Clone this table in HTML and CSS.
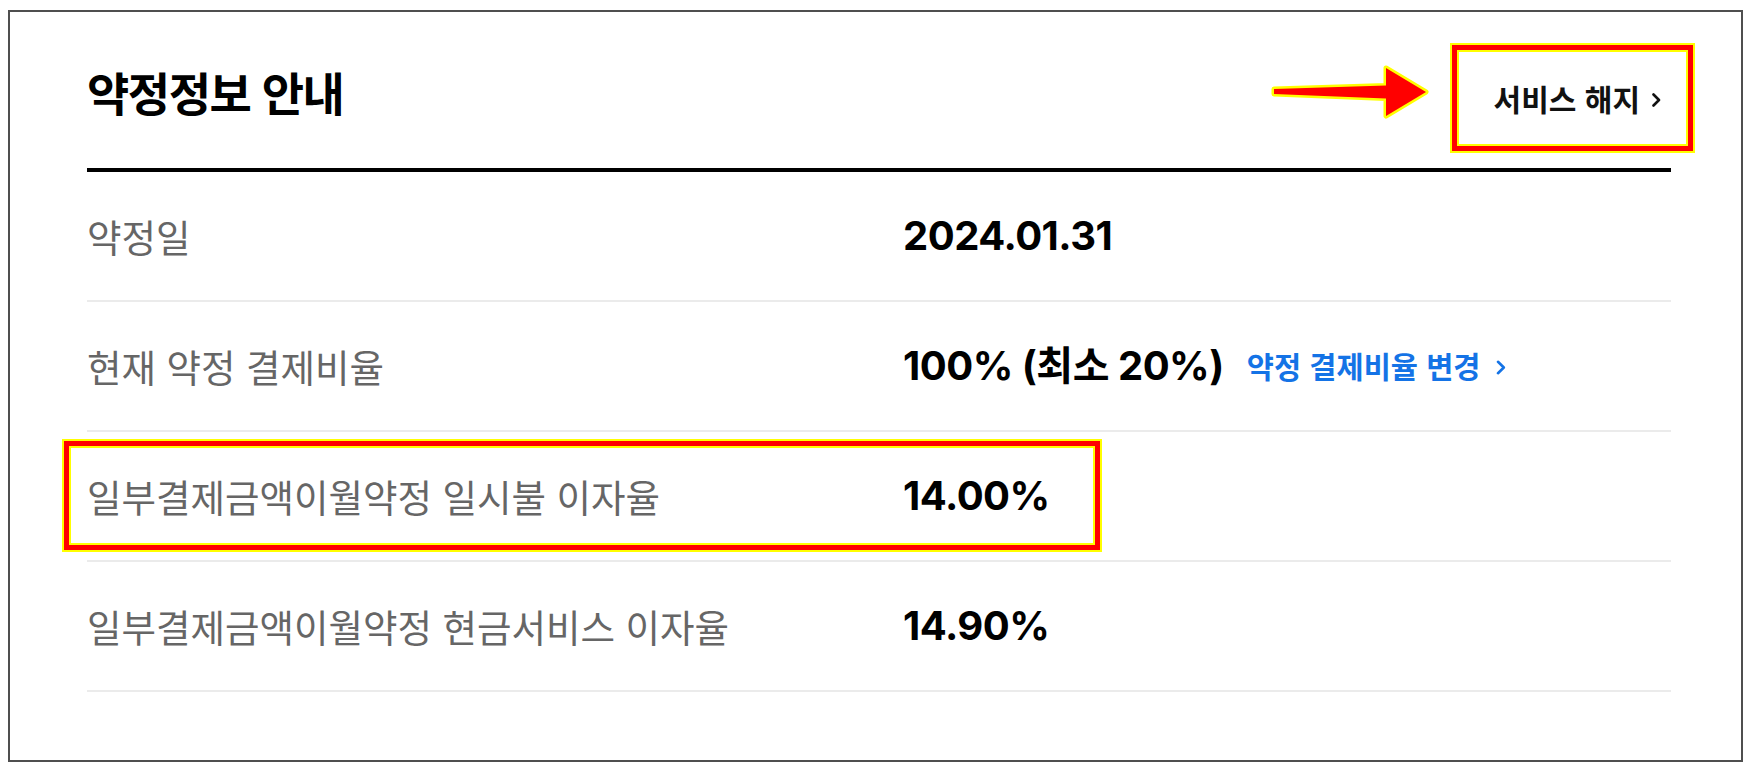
FILE: index.html
```html
<!DOCTYPE html>
<html lang="ko">
<head>
<meta charset="utf-8">
<title>약정정보 안내</title>
<link rel="stylesheet" href="styles.css">
</head>
<body>
<div class="frame">
  <div class="header">
    <h2 class="title">약정정보 안내</h2>
    <a class="cancel">서비스 해지<svg class="chev" width="9" height="14" viewBox="0 0 9 14"><path d="M1.5 1.5 L7 7 L1.5 12.5" fill="none" stroke="currentColor" stroke-width="2.6" stroke-linecap="round" stroke-linejoin="round"/></svg></a>
  </div>
  <div class="row">
    <div class="label">약정일</div>
    <div class="value"><span class="num">2024.01.31</span></div>
  </div>
  <div class="row">
    <div class="label">현재 약정 결제비율</div>
    <div class="value"><span class="num">100% (최소 20%)</span><a class="link">약정 결제비율 변경<svg class="chev2" width="10" height="15" viewBox="0 0 10 15"><path d="M2 1.8 L7.8 7.5 L2 13.2" fill="none" stroke="currentColor" stroke-width="2.6" stroke-linecap="round" stroke-linejoin="round"/></svg></a></div>
  </div>
  <div class="row">
    <div class="label">일부결제금액이월약정 일시불 이자율</div>
    <div class="value"><span class="num">14.00%</span></div>
  </div>
  <div class="row">
    <div class="label">일부결제금액이월약정 현금서비스 이자율</div>
    <div class="value"><span class="num">14.90%</span></div>
  </div>
</div>
<div class="mark mark-cancel"></div>
<div class="mark mark-row"></div>
<svg class="arrow" width="175" height="70" viewBox="0 0 175 70"><polygon points="9,29 121,25.5 121,8 161,32 121,56 121,38.5 9,34" fill="#ff0000" stroke="#ffff00" stroke-width="5" stroke-linejoin="round" paint-order="stroke fill"/></svg>
</body>
</html>
```
FILE: styles.css
```css
html, body {
  margin: 0;
  padding: 0;
  background: #ffffff;
}
body {
  width: 1752px;
  height: 770px;
  font-family: "Noto Sans CJK KR", "Noto Sans", sans-serif;
  color: #111;
}
.frame {
  box-sizing: border-box;
  margin: 10px 0 0 8px;
  width: 1735px;
  height: 752px;
  border: 2px solid #4f4f4f;
  padding: 0 70px 0 77px;
  background: #fff;
}
.header {
  box-sizing: border-box;
  height: 160px;
  padding-top: 56px;
  display: flex;
  justify-content: space-between;
  align-items: baseline;
  border-bottom: 4px solid #000;
}
.title {
  margin: 0;
  font-size: 46px;
  line-height: 1;
  font-weight: 700;
  color: #000;
  letter-spacing: -1.5px;
}
.cancel {
  display: flex;
  align-items: center;
  gap: 12px;
  font-size: 30px;
  line-height: 1;
  font-weight: 700;
  color: #111;
  padding-right: 10px;
}
.chev {
  display: block;
  margin-top: 4px;
}
.row {
  box-sizing: border-box;
  height: 130px;
  display: grid;
  grid-template-columns: 816px 1fr;
  align-items: center;
  border-bottom: 2px solid #ebebeb;
}
.label {
  font-size: 37.5px;
  line-height: 1;
  color: #666;
  font-weight: 400;
}
.value {
  display: flex;
  align-items: center;
  gap: 23px;
}
.num {
  font-family: Inter, "Noto Sans CJK KR", sans-serif;
  font-size: 40px;
  line-height: 1;
  font-weight: 700;
  color: #000;
  letter-spacing: -0.5px;
}
.link {
  display: flex;
  align-items: center;
  gap: 16px;
  font-size: 29.5px;
  line-height: 1;
  font-weight: 700;
  color: #1473e6;
}
.chev2 {
  display: block;
  margin-top: 3px;
}
.mark {
  position: absolute;
  box-sizing: border-box;
  border: 5px solid #ff0000;
  outline: 2px solid #ffff00;
  box-shadow: inset 0 0 0 2px #ffff00;
}
.mark-cancel {
  left: 1452px;
  top: 45px;
  width: 241px;
  height: 106px;
}
.mark-row {
  left: 64px;
  top: 441px;
  width: 1036px;
  height: 109px;
}
.arrow {
  position: absolute;
  left: 1265px;
  top: 60px;
}
```
